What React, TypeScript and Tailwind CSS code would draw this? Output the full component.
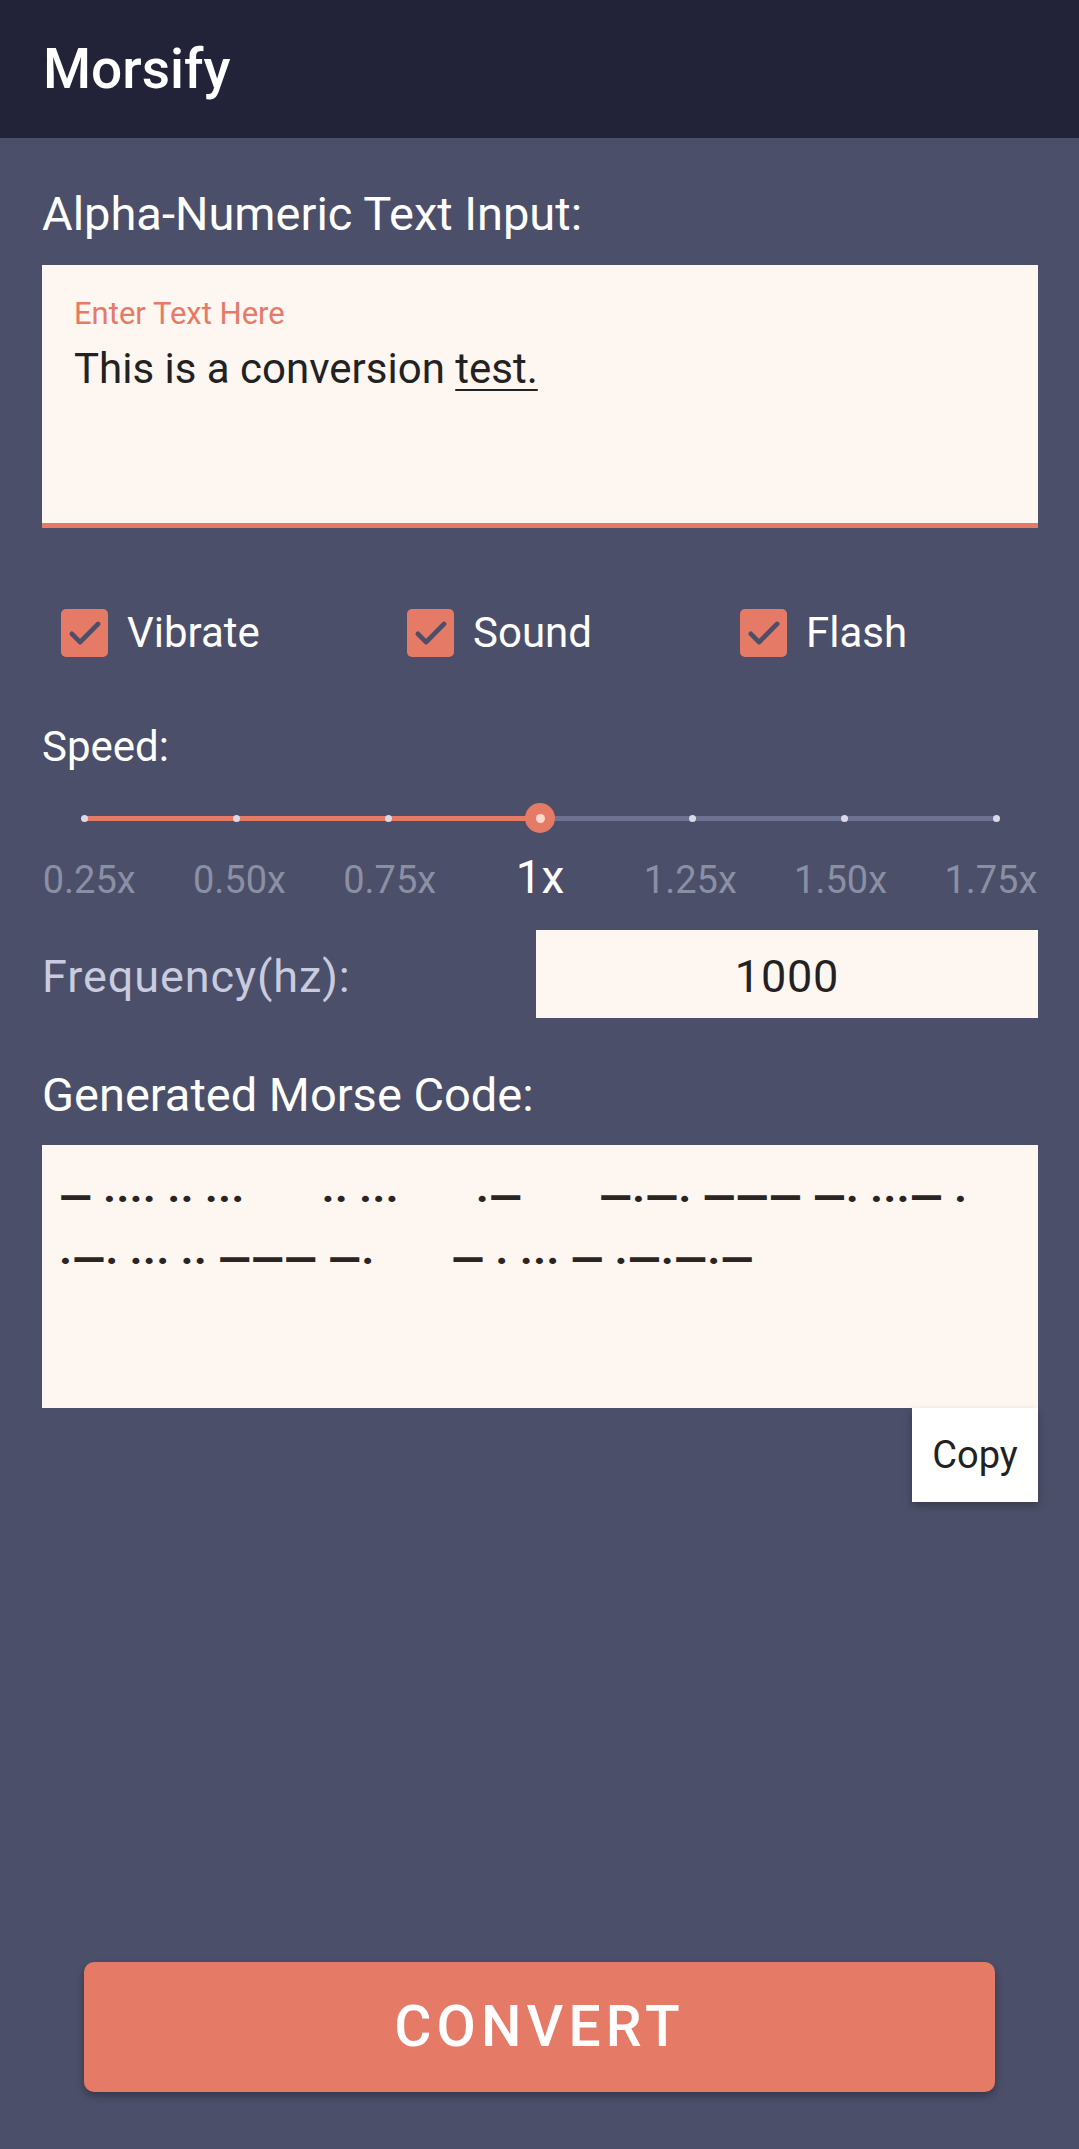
import React from "react";

const speeds = ["0.25x", "0.50x", "0.75x", "1x", "1.25x", "1.50x", "1.75x"];
const options = ["Vibrate", "Sound", "Flash"];

const morse =
  "— ···· ·· ···       ·· ···       ·—       —·—· ——— —· ···— ·\n·—· ··· ·· ——— —·       — · ··· — ·—·—·—";

function CheckBox() {
  return (
    <span className="flex h-[48px] w-[47px] items-center justify-center rounded-[5px] bg-[#e57a66]">
      <svg viewBox="0 0 24 24" className="h-[42px] w-[42px]" fill="none">
        <polyline points="4.5,12.5 9.2,17.2 19.5,6.8" stroke="#4b4f69" strokeWidth="2.7" strokeLinecap="round" strokeLinejoin="round" />
      </svg>
    </span>
  );
}

export default function App() {
  const active = 3;

  return (
    <div className="flex min-h-screen flex-col bg-[#4b4f69] font-['Roboto',sans-serif]">
      {/* Toolbar */}
      <header className="flex h-[138px] items-center bg-[#222339] px-[43px]">
        <h1 className="text-[55px] font-medium leading-none text-white">Morsify</h1>
      </header>

      <main className="flex flex-1 flex-col px-[42px] pr-[41px]">
        <p className="mt-[48px] text-[47px] leading-[56px] text-white">Alpha-Numeric Text Input:</p>

        {/* Text input */}
        <div className="mt-[23px] h-[263px] border-b-[5px] border-[#e57a66] bg-[#fef6f1] pl-[32px] pt-[30px]">
          <p className="text-[31px] leading-[38px] text-[#e57a66]">Enter Text Here</p>
          <p className="mt-[11px] text-[42px] leading-[50px] text-[#222222]">
            This is a conversion <span className="underline decoration-[2px] underline-offset-[6px]">test.</span>
          </p>
        </div>

        {/* Output options */}
        <div className="mt-[81px] grid grid-cols-[346px_333px_1fr] pl-[19px]">
          {options.map((o) => (
            <label key={o} className="flex h-[48px] items-center gap-[19px]">
              <CheckBox />
              <span className="text-[42px] leading-[50px] text-white">{o}</span>
            </label>
          ))}
        </div>

        <p className="mt-[65px] text-[42px] leading-[50px] text-white">Speed:</p>

        {/* Speed slider */}
        <div className="mx-[-34px] mt-[31px]">
          <div className="relative grid h-[30px] grid-cols-7 items-center">
            <div className="absolute left-[76px] right-[76px] top-[13px] flex h-[5px]">
              <div className="h-full w-1/2 bg-[#e57a66]" />
              <div className="h-full w-1/2 bg-[#6e7293]" />
            </div>
            {speeds.map((s, i) =>
              i === active ? (
                <div key={s} className="relative flex justify-center">
                  <span className="flex h-[30px] w-[30px] items-center justify-center rounded-full bg-[#e57a66]">
                    <span className="h-[9px] w-[9px] rounded-full bg-[#fdd9cf]" />
                  </span>
                </div>
              ) : (
                <div key={s} className="relative flex justify-center">
                  <span className="h-[7px] w-[7px] rounded-full bg-[#d9dae6]" />
                </div>
              )
            )}
          </div>

          <div className="mt-[21px] grid grid-cols-7 items-baseline px-[6px]">
            {speeds.map((s, i) => (
              <span
                key={s}
                className={
                  i === active
                    ? "text-center text-[46px] leading-[46px] text-white"
                    : "text-center text-[38px] leading-[40px] text-[#8b8fa4]"
                }
              >
                {s}
              </span>
            ))}
          </div>
        </div>

        {/* Frequency */}
        <div className="mt-[30px] flex h-[88px] items-stretch">
          <div className="flex flex-1 items-center pt-[6px] text-[45px] leading-[50px] tracking-[0.9px] text-[#c9cbdf]">
            Frequency(hz):
          </div>
          <div className="flex w-[502px] items-center justify-center bg-[#fef6f1] pt-[6px] text-[45px] leading-[50px] tracking-[0.8px] text-[#222222]">
            1000
          </div>
        </div>

        <p className="mt-[49px] text-[47px] leading-[56px] text-white">Generated Morse Code:</p>

        {/* Morse output */}
        <div className="mt-[22px] h-[263px] bg-[#fef6f1] pl-[17px] pr-[12px] pt-[22px]">
          <p className="whitespace-pre-wrap text-[43px] font-bold leading-[62px] tracking-[0.3px] text-[#2a2522]">{morse}</p>
        </div>
        <div className="flex justify-end">
          <button className="h-[94px] w-[126px] bg-white text-[38px] text-[#222222] shadow-[0_4px_8px_rgba(0,0,0,0.25)]">
            Copy
          </button>
        </div>
      </main>

      <div className="px-[84px] pb-[57px]">
        <button className="h-[130px] w-full rounded-[10px] bg-[#e57a66] text-[57px] font-medium tracking-[0.09em] text-white shadow-[0_4px_8px_rgba(0,0,0,0.3)]">
          CONVERT
        </button>
      </div>
    </div>
  );
}
